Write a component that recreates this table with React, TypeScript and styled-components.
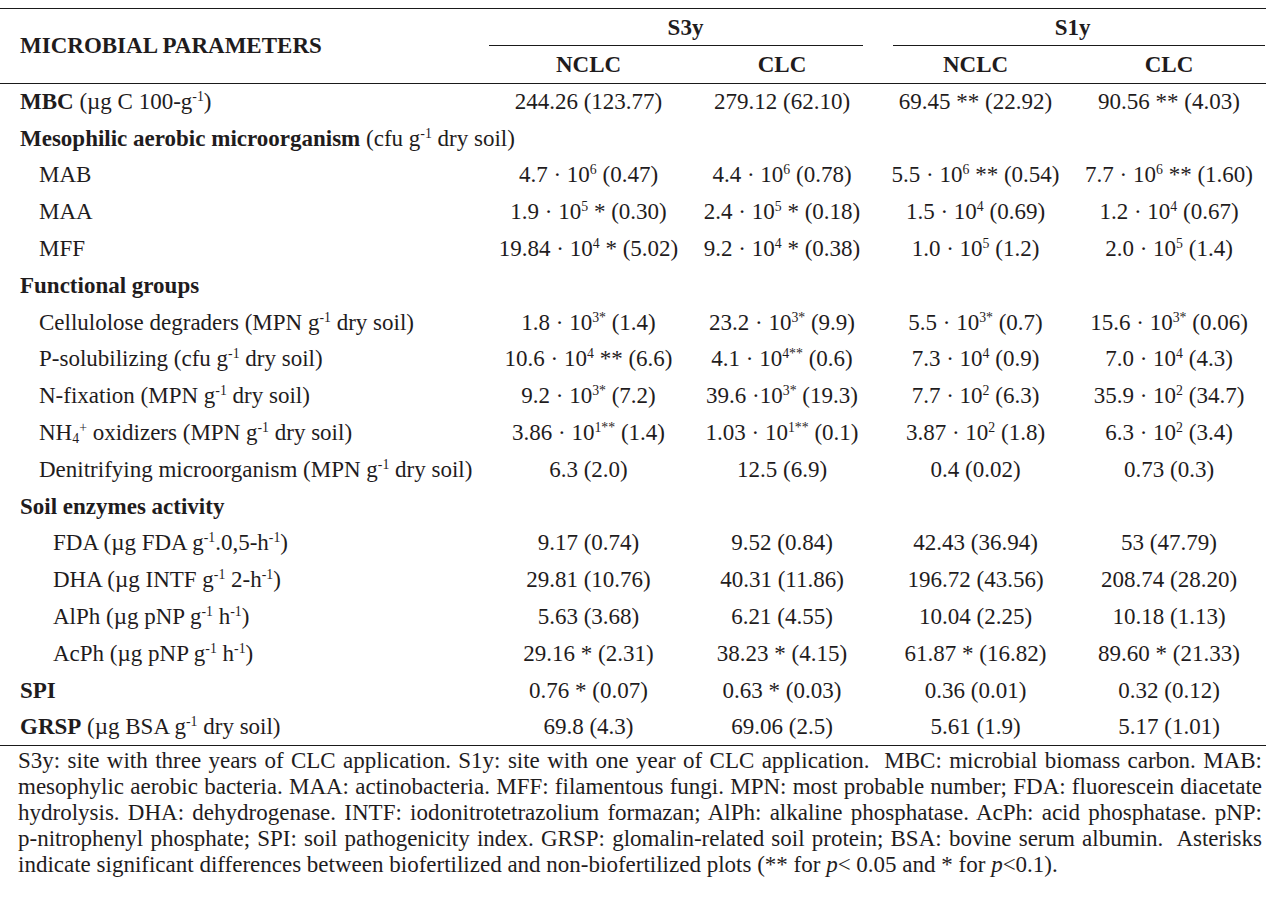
import React from "react";
import styled, { createGlobalStyle } from "styled-components";

const Global = createGlobalStyle`
  html, body { margin: 0; padding: 0; background: #ffffff; }
  body { font-family: "Liberation Serif", "Times New Roman", serif; color: #1f1c1d; }
`;

const Page = styled.div`
  padding-top: 8px;
  width: 1266px;
`;

const Table = styled.table`
  width: 1266px;
  table-layout: fixed;
  border-collapse: collapse;
  font-family: "Liberation Serif", "Times New Roman", serif;
  font-size: 23px;
  color: #1f1c1d;
  border-top: 1px solid #1a1a1a;
  border-bottom: 1px solid #1a1a1a;
`;

const ParamHead = styled.th`
  text-align: left;
  vertical-align: middle;
  font-weight: bold;
  padding: 0 0 0 20px;
  white-space: nowrap;
  border-bottom: 1px solid #1a1a1a;
`;

const GroupHead = styled.th<{ $left: number; $right: number }>`
  position: relative;
  height: 37px;
  padding: 0;
  font-weight: bold;
  text-align: center;
  vertical-align: middle;
  &::after {
    content: "";
    position: absolute;
    bottom: 0;
    left: ${(p) => p.$left}px;
    right: ${(p) => p.$right}px;
    border-bottom: 1px solid #1a1a1a;
  }
`;

const SubHead = styled.th`
  height: 37px;
  padding: 0;
  font-weight: bold;
  text-align: center;
  vertical-align: middle;
  border-bottom: 1px solid #1a1a1a;
`;

const Row = styled.tr`
  height: 36.8px;
`;

const LabelCell = styled.td<{ $indent: number }>`
  padding: 0 0 0 ${(p) => p.$indent}px;
  vertical-align: middle;
  white-space: nowrap;
`;

const Strong = styled.b`
  font-weight: bold;
`;

const ValueCell = styled.td`
  padding: 0;
  text-align: center;
  vertical-align: middle;
  white-space: nowrap;
`;

const Sup = styled.sup`
  font-size: 0.6em;
  line-height: 0;
  vertical-align: 0.55em;
`;

const Sub = styled.sub`
  font-size: 0.6em;
  line-height: 0;
  vertical-align: -0.25em;
`;

const Footnote = styled.div`
  margin: 2px 0 0 18px;
  width: 1244px;
  font-size: 23px;
  line-height: 26px;
`;

const FootLine = styled.div<{ $last?: boolean }>`
  white-space: nowrap;
  text-align: ${(p) => (p.$last ? "left" : "justify")};
  text-align-last: ${(p) => (p.$last ? "left" : "justify")};
`;

const Em = styled.i`
  font-style: italic;
`;

type RowData = { label: React.ReactNode; level: number; values?: React.ReactNode[] };

const E = (base: string, exp: string, tail: React.ReactNode) => (
  <>
    {base} · 10<Sup>{exp}</Sup>
    {tail}
  </>
);

const rows: RowData[] = [
  {
    level: 0,
    label: (
      <>
        <Strong>MBC</Strong> (µg C 100-g<Sup>-1</Sup>)
      </>
    ),
    values: ["244.26 (123.77)", "279.12 (62.10)", "69.45 ** (22.92)", "90.56 ** (4.03)"],
  },
  {
    level: 0,
    label: (
      <>
        <Strong>Mesophilic aerobic microorganism</Strong> (cfu g<Sup>-1</Sup> dry soil)
      </>
    ),
  },
  {
    level: 1,
    label: "MAB",
    values: [E("4.7", "6", " (0.47)"), E("4.4", "6", " (0.78)"), E("5.5", "6", " ** (0.54)"), E("7.7", "6", " ** (1.60)")],
  },
  {
    level: 1,
    label: "MAA",
    values: [E("1.9", "5", " * (0.30)"), E("2.4", "5", " * (0.18)"), E("1.5", "4", " (0.69)"), E("1.2", "4", " (0.67)")],
  },
  {
    level: 1,
    label: "MFF",
    values: [E("19.84", "4", " * (5.02)"), E("9.2", "4", " * (0.38)"), E("1.0", "5", " (1.2)"), E("2.0", "5", " (1.4)")],
  },
  { level: 0, label: <Strong>Functional groups</Strong> },
  {
    level: 1,
    label: (
      <>
        Cellulolose degraders (MPN g<Sup>-1</Sup> dry soil)
      </>
    ),
    values: [E("1.8", "3*", " (1.4)"), E("23.2", "3*", " (9.9)"), E("5.5", "3*", " (0.7)"), E("15.6", "3*", " (0.06)")],
  },
  {
    level: 1,
    label: (
      <>
        P-solubilizing (cfu g<Sup>-1</Sup> dry soil)
      </>
    ),
    values: [E("10.6", "4", " ** (6.6)"), E("4.1", "4**", " (0.6)"), E("7.3", "4", " (0.9)"), E("7.0", "4", " (4.3)")],
  },
  {
    level: 1,
    label: (
      <>
        N-fixation (MPN g<Sup>-1</Sup> dry soil)
      </>
    ),
    values: [
      E("9.2", "3*", " (7.2)"),
      <>
        39.6 ·10<Sup>3*</Sup> (19.3)
      </>,
      E("7.7", "2", " (6.3)"),
      E("35.9", "2", " (34.7)"),
    ],
  },
  {
    level: 1,
    label: (
      <>
        NH<Sub>4</Sub>
        <Sup>+</Sup> oxidizers (MPN g<Sup>-1</Sup> dry soil)
      </>
    ),
    values: [E("3.86", "1**", " (1.4)"), E("1.03", "1**", " (0.1)"), E("3.87", "2", " (1.8)"), E("6.3", "2", " (3.4)")],
  },
  {
    level: 1,
    label: (
      <>
        Denitrifying microorganism (MPN g<Sup>-1</Sup> dry soil)
      </>
    ),
    values: ["6.3 (2.0)", "12.5 (6.9)", "0.4 (0.02)", "0.73 (0.3)"],
  },
  { level: 0, label: <Strong>Soil enzymes activity</Strong> },
  {
    level: 2,
    label: (
      <>
        FDA (µg FDA g<Sup>-1</Sup>.0,5-h<Sup>-1</Sup>)
      </>
    ),
    values: ["9.17 (0.74)", "9.52 (0.84)", "42.43 (36.94)", "53 (47.79)"],
  },
  {
    level: 2,
    label: (
      <>
        DHA (µg INTF g<Sup>-1</Sup> 2-h<Sup>-1</Sup>)
      </>
    ),
    values: ["29.81 (10.76)", "40.31 (11.86)", "196.72 (43.56)", "208.74 (28.20)"],
  },
  {
    level: 2,
    label: (
      <>
        AlPh (µg pNP g<Sup>-1</Sup> h<Sup>-1</Sup>)
      </>
    ),
    values: ["5.63 (3.68)", "6.21 (4.55)", "10.04 (2.25)", "10.18 (1.13)"],
  },
  {
    level: 2,
    label: (
      <>
        AcPh (µg pNP g<Sup>-1</Sup> h<Sup>-1</Sup>)
      </>
    ),
    values: ["29.16 * (2.31)", "38.23 * (4.15)", "61.87 * (16.82)", "89.60 * (21.33)"],
  },
  {
    level: 0,
    label: <Strong>SPI</Strong>,
    values: ["0.76 * (0.07)", "0.63 * (0.03)", "0.36 (0.01)", "0.32 (0.12)"],
  },
  {
    level: 0,
    label: (
      <>
        <Strong>GRSP</Strong> (µg BSA g<Sup>-1</Sup> dry soil)
      </>
    ),
    values: ["69.8 (4.3)", "69.06 (2.5)", "5.61 (1.9)", "5.17 (1.01)"],
  },
];

const indentFor = (level: number) => (level === 0 ? 20 : level === 1 ? 39 : 53);

const footLines: React.ReactNode[] = [
  <>S3y: site with three years of CLC application. S1y: site with one year of CLC application.&nbsp; MBC: microbial biomass carbon. MAB:</>,
  <>mesophylic aerobic bacteria. MAA: actinobacteria. MFF: filamentous fungi. MPN: most probable number; FDA: fluorescein diacetate</>,
  <>hydrolysis. DHA: dehydrogenase. INTF: iodonitrotetrazolium formazan; AlPh: alkaline phosphatase. AcPh: acid phosphatase. pNP:</>,
  <>p-nitrophenyl phosphate; SPI: soil pathogenicity index. GRSP: glomalin-related soil protein; BSA: bovine serum albumin.&nbsp; Asterisks</>,
  <>
    indicate significant differences between biofertilized and non-biofertilized plots (** for <Em>p</Em>&lt; 0.05 and * for{" "}
    <Em>p</Em>&lt;0.1).
  </>,
];

export default function App() {
  return (
    <Page>
      <Global />
      <Table>
        <colgroup>
          <col style={{ width: 492 }} />
          <col style={{ width: 193 }} />
          <col style={{ width: 194 }} />
          <col style={{ width: 193 }} />
          <col style={{ width: 194 }} />
        </colgroup>
        <thead>
          <tr>
            <ParamHead rowSpan={2}>MICROBIAL PARAMETERS</ParamHead>
            <GroupHead colSpan={2} $left={-3} $right={16}>
              S3y
            </GroupHead>
            <GroupHead colSpan={2} $left={14} $right={1}>
              S1y
            </GroupHead>
          </tr>
          <tr>
            <SubHead>NCLC</SubHead>
            <SubHead>CLC</SubHead>
            <SubHead>NCLC</SubHead>
            <SubHead>CLC</SubHead>
          </tr>
        </thead>
        <tbody>
          {rows.map((r, i) => (
            <Row key={i}>
              <LabelCell $indent={indentFor(r.level)}>{r.label}</LabelCell>
              {(r.values ?? ["", "", "", ""]).map((v, j) => (
                <ValueCell key={j}>{v}</ValueCell>
              ))}
            </Row>
          ))}
        </tbody>
      </Table>
      <Footnote>
        {footLines.map((l, i) => (
          <FootLine key={i} $last={i === footLines.length - 1}>
            {l}
          </FootLine>
        ))}
      </Footnote>
    </Page>
  );
}
